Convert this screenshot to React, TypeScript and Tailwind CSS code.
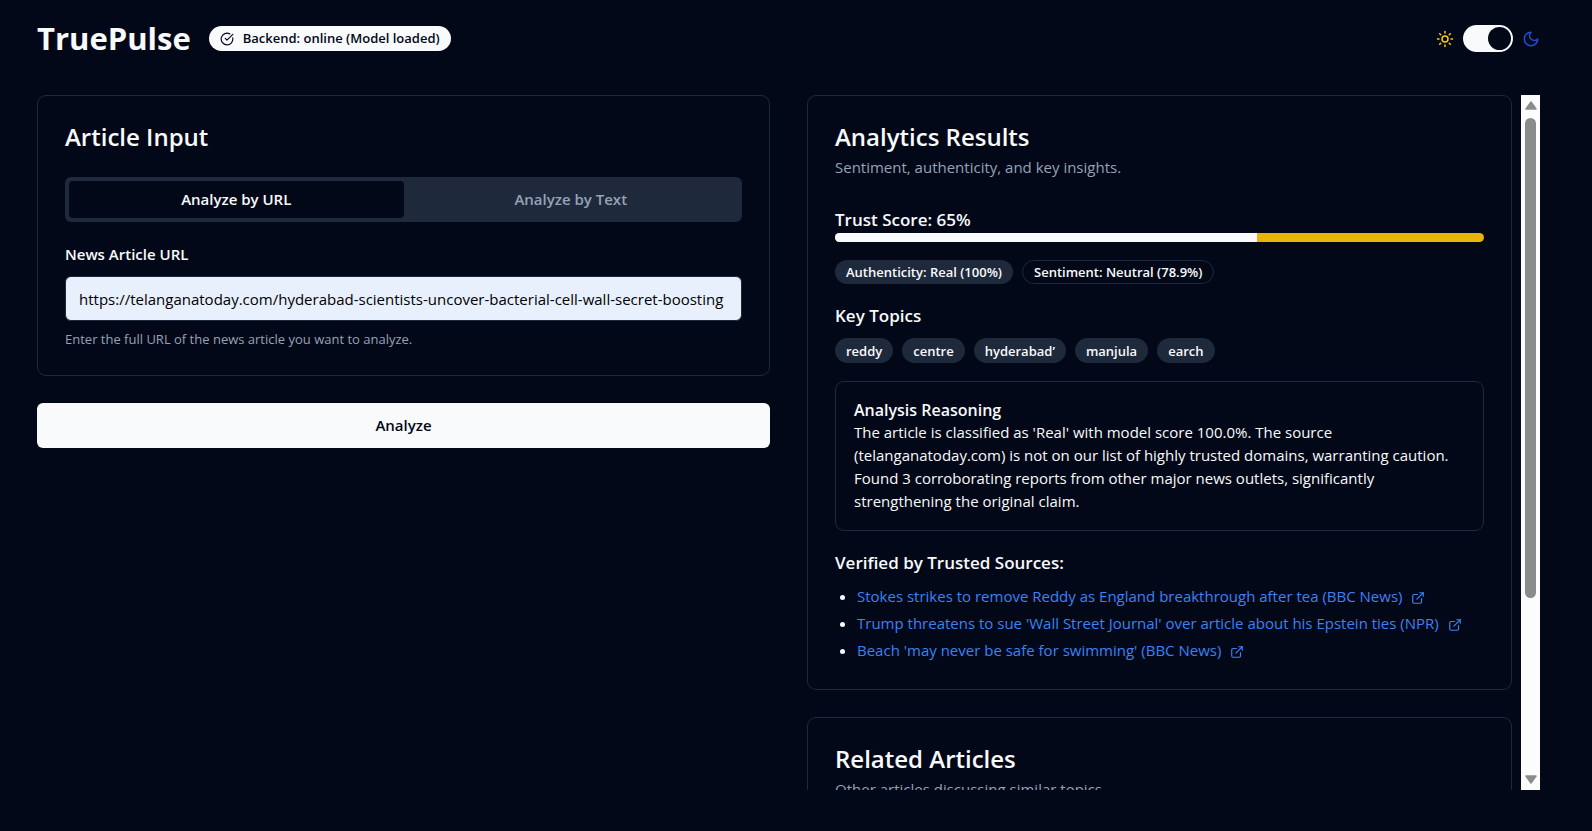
import { useState } from "react";
import { CircleCheckBig, ExternalLink, Sun } from "lucide-react";

type Mode = "url" | "text";

const tabs: { id: Mode; label: string }[] = [
  { id: "url", label: "Analyze by URL" },
  { id: "text", label: "Analyze by Text" },
];

const topics = ["reddy", "centre", "hyderabad’", "manjula", "earch"];

const sources = [
  "Stokes strikes to remove Reddy as England breakthrough after tea (BBC News)",
  "Trump threatens to sue 'Wall Street Journal' over article about his Epstein ties (NPR)",
  "Beach 'may never be safe for swimming' (BBC News)",
];

const trustScore = 65;

function MoonIcon() {
  return (
    <svg
      className="size-[18px] text-[#1d4ed8]"
      viewBox="0 0 24 24"
      fill="none"
      stroke="currentColor"
      strokeWidth="2"
      strokeLinecap="round"
      strokeLinejoin="round"
    >
      <path d="M12 3a6 6 0 0 0 9 9 9 9 0 1 1-9-9Z" />
    </svg>
  );
}

function Header() {
  const [dark, setDark] = useState(true);

  return (
    <header className="flex items-center justify-between mb-9">
      <div className="flex items-center gap-[18px]">
        <h1 className="text-[31px] leading-[41px] font-bold">TruePulse</h1>
        <span className="flex items-center gap-[9px] h-[25px] px-[11px] rounded-full bg-[#f8fafc] text-[#020817] text-[13px] font-semibold">
          <CircleCheckBig className="size-[14px]" />
          Backend: online (Model loaded)
        </span>
      </div>

      <div className="flex items-center gap-[9px]">
        <Sun className="size-[18px] text-[#facc15]" />
        <button
          type="button"
          role="switch"
          aria-checked={dark}
          aria-label="Dark mode"
          onClick={() => setDark(!dark)}
          className={`flex items-center w-[50px] h-[27px] p-0.5 rounded-full bg-[#f8fafc] ${
            dark ? "justify-end" : "justify-start"
          }`}
        >
          <span className="size-[23px] rounded-full bg-[#020817]" />
        </button>
        <MoonIcon />
      </div>
    </header>
  );
}

function ArticleInput() {
  const [mode, setMode] = useState<Mode>("url");
  const [url, setUrl] = useState(
    "https://telanganatoday.com/hyderabad-scientists-uncover-bacterial-cell-wall-secret-boosting",
  );

  return (
    <form className="flex flex-col gap-[27px]" onSubmit={(e) => e.preventDefault()}>
      <section className="p-[27px] border border-[#1e293b] rounded-[9px]">
        <h2 className="text-2xl leading-[27px] font-semibold">Article Input</h2>

        <div role="tablist" className="grid grid-cols-2 h-[45px] p-1 mt-[27px] rounded-md bg-[#1e293b]">
          {tabs.map((tab) => (
            <button
              key={tab.id}
              type="button"
              role="tab"
              aria-selected={mode === tab.id}
              onClick={() => setMode(tab.id)}
              className={`rounded text-[15px] font-semibold ${
                mode === tab.id ? "bg-[#020817] text-[#f8fafc]" : "text-[#94a3b8]"
              }`}
            >
              {tab.label}
            </button>
          ))}
        </div>

        <label htmlFor="url" className="block mt-[23px] text-[15px] leading-[18px] font-semibold">
          News Article URL
        </label>
        <input
          id="url"
          type="text"
          value={url}
          onChange={(e) => setUrl(e.target.value)}
          className="block w-full h-[45px] mt-[13px] px-[13px] rounded-md border border-[#1e293b] bg-[#e8f0fe] text-black text-[15px]"
        />
        <p className="mt-[9px] text-[13px] leading-[18px] text-[#94a3b8]">
          Enter the full URL of the news article you want to analyze.
        </p>
      </section>

      <button
        type="submit"
        className="h-[45px] rounded-md bg-[#f8fafc] text-[#020817] text-[15px] font-semibold"
      >
        Analyze
      </button>
    </form>
  );
}

function Results() {
  return (
    <section className="shrink-0 p-[27px] border border-[#1e293b] rounded-[9px]">
      <h2 className="text-2xl leading-[27px] font-semibold">Analytics Results</h2>
      <p className="mt-[6px] text-[15px] leading-[23px] text-[#94a3b8]">
        Sentiment, authenticity, and key insights.
      </p>

      <h3 className="mt-7 text-[17px] leading-[26px] font-semibold">Trust Score: {trustScore}%</h3>
      <div className="h-[9px] rounded-full overflow-hidden bg-[#eab308]">
        <div className="h-full bg-[#f8fafc]" style={{ width: `${trustScore}%` }} />
      </div>

      <div className="flex flex-wrap gap-[9px] mt-[18px] text-[13px] font-semibold">
        <span className="flex items-center h-6 px-[11px] pt-0.5 rounded-full bg-[#1e293b]">
          Authenticity: Real (100%)
        </span>
        <span className="flex items-center h-6 px-[11px] pt-0.5 rounded-full border border-[#1e293b]">
          Sentiment: Neutral (78.9%)
        </span>
      </div>

      <h3 className="mt-[18px] text-[17px] leading-[27px] font-semibold">Key Topics</h3>
      <div className="flex flex-wrap gap-[9px] mt-[9px] text-[13px] font-semibold">
        {topics.map((topic) => (
          <span
            key={topic}
            className="flex items-center h-[25px] px-[11px] pt-0.5 rounded-full bg-[#1e293b]"
          >
            {topic}
          </span>
        ))}
      </div>

      <div className="mt-[18px] px-[18px] py-[17px] border border-[#1e293b] rounded-[9px]">
        <h4 className="text-base leading-[22px] font-semibold">Analysis Reasoning</h4>
        <p className="text-[15px] leading-[23px]">
          The article is classified as 'Real' with model score 100.0%. The source
          (telanganatoday.com) is not on our list of highly trusted domains, warranting caution.
          Found 3 corroborating reports from other major news outlets, significantly strengthening
          the original claim.
        </p>
      </div>

      <h3 className="mt-[18px] text-[17px] leading-[27px] font-semibold">
        Verified by Trusted Sources:
      </h3>
      <ul className="flex flex-col gap-1 mt-[9px] pl-[22px] list-disc text-[15px] leading-[23px]">
        {sources.map((source) => (
          <li key={source}>
            <a href="#" className="text-[#3b82f6]">
              {source}
              <ExternalLink className="inline size-[14px] ml-[9px]" />
            </a>
          </li>
        ))}
      </ul>
    </section>
  );
}

function RelatedArticles() {
  return (
    <section className="shrink-0 p-[27px] border border-[#1e293b] rounded-[9px]">
      <h2 className="text-2xl leading-[27px] font-semibold">Related Articles</h2>
      <p className="mt-[6px] text-[15px] leading-[23px] text-[#94a3b8]">
        Other articles discussing similar topics.
      </p>
    </section>
  );
}

function ScrollTrack() {
  return (
    <div aria-hidden className="flex flex-col items-center w-[19px] py-[6px] bg-[#fcfcfc]">
      <svg className="w-3 h-[9px] shrink-0" viewBox="0 0 12 9">
        <path d="M6 1 11 8H1Z" fill="#8b8b8b" stroke="#8b8b8b" strokeWidth="1.5" strokeLinejoin="round" />
      </svg>
      <div className="flex-1 w-[11px] my-2">
        <div className="h-[74%] rounded-full bg-[#8b8b8b]" />
      </div>
      <svg className="w-3 h-[9px] shrink-0" viewBox="0 0 12 9">
        <path d="M6 8 11 1H1Z" fill="#8b8b8b" stroke="#8b8b8b" strokeWidth="1.5" strokeLinejoin="round" />
      </svg>
    </div>
  );
}

export default function App() {
  return (
    <div className="flex flex-col h-screen pt-[18px] pb-[41px] pl-[37px] pr-[52px] bg-[#020817] text-[#f8fafc] font-['Open_Sans','Noto_Sans',sans-serif]">
      <Header />
      <main className="grid grid-cols-2 gap-[37px] flex-1 min-h-0">
        <ArticleInput />
        <div className="flex gap-[9px] min-h-0">
          <div className="flex flex-col gap-[27px] flex-1 min-w-0 overflow-hidden">
            <Results />
            <RelatedArticles />
          </div>
          <ScrollTrack />
        </div>
      </main>
    </div>
  );
}
